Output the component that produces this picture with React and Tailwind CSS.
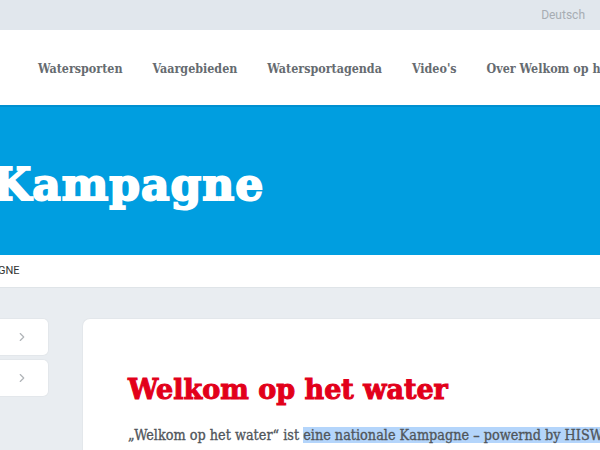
import React from 'react';
import { ChevronRight } from 'lucide-react';

const slab = { fontFamily: '"DejaVu Serif Condensed", "DejaVu Serif", serif' };
const heavy = { fontFamily: '"DejaVu Serif", serif' };

const navItems = ['Watersporten', 'Vaargebieden', 'Watersportagenda', "Video's", 'Over Welkom op het water'];

const App = () => {
    return (
        <div className="w-[600px] h-[450px] overflow-hidden bg-[#e9edf1]" style={{ fontFamily: '"Liberation Sans", sans-serif' }}>
            {/* Top bar */}
            <div className="h-[30px] bg-[#e1e7ed] flex items-center justify-end pr-[15px]">
                <span className="text-[12px] text-[#a7adb3]" style={{ fontFamily: 'Roboto, sans-serif' }}>Deutsch</span>
            </div>

            {/* Navigation */}
            <div className="h-[75px] bg-white flex items-center whitespace-nowrap pl-[38px] pt-[3px] gap-[30px]" style={slab}>
                {navItems.map((item) => (
                    <span key={item} className="text-[12.4px] font-bold text-[#666b70]">{item}</span>
                ))}
            </div>

            {/* Banner */}
            <div className="h-[150px] bg-[#009ee0] border-t-2 border-[#0090d0] flex items-center">
                <h1 className="ml-[-7px] text-[44px] font-bold text-white leading-none pt-[8px] tracking-[1px] [-webkit-text-stroke:2px_white]" style={heavy}>Kampagne</h1>
            </div>

            {/* Breadcrumb */}
            <div className="h-[33px] bg-white flex items-center border-b border-[#dfe4e8]">
                <span className="ml-[-2px] text-[11px] text-[#333]" style={{ fontFamily: 'Roboto, sans-serif' }}>GNE</span>
            </div>

            {/* Main */}
            <div className="flex pt-[30px] gap-[33px]">
                <div className="w-[49px] flex flex-col gap-[3px]">
                    <div className="h-[38px] bg-white rounded-r-[6px] border border-l-0 border-[#e3e7eb] flex items-center justify-end pr-[19px]">
                        <ChevronRight size={14} className="text-[#b0b4b8]" />
                    </div>
                    <div className="h-[38px] bg-white rounded-r-[6px] border border-l-0 border-[#e3e7eb] flex items-center justify-end pr-[19px]">
                        <ChevronRight size={14} className="text-[#b0b4b8]" />
                    </div>
                </div>
                <div className="flex-1 bg-white rounded-tl-[8px] border border-r-0 border-[#e3e7eb] pl-[45px] pt-[57px] h-[200px] whitespace-nowrap overflow-hidden">
                    <h2 className="text-[27px] font-bold text-[#e2001a] leading-none [-webkit-text-stroke:1px_#e2001a]" style={heavy}>Welkom op het water</h2>
                    <p className="mt-[22px] text-[14.3px] text-[#50555a] [-webkit-text-stroke:0.3px_#50555a]" style={slab}>
                        „Welkom op het water“ ist <span className="bg-[#b4d5fb]">eine nationale Kampagne – powernd by HISWA</span>
                    </p>
                </div>
            </div>
        </div>
    );
};

export default App;
